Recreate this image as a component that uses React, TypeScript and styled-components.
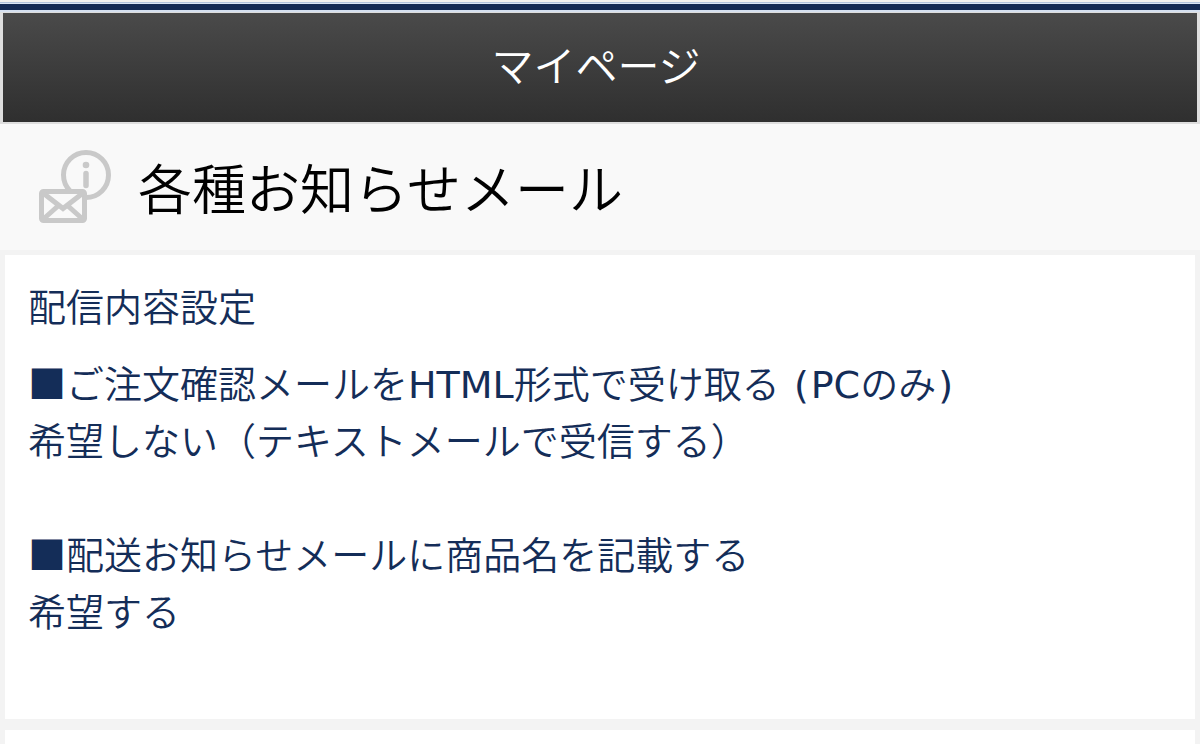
import React from 'react';
import styled, { createGlobalStyle } from 'styled-components';

const GlobalStyle = createGlobalStyle`
  * { box-sizing: border-box; }
  html, body { margin: 0; padding: 0; }
  body {
    background: #f3f3f3;
    color: #142d58;
    font-family: "Noto Sans CJK JP", sans-serif;
    font-weight: 350;
    overflow-x: hidden;
  }
`;

const TopRule = styled.div`
  height: 12px;
  background: linear-gradient(
    to bottom,
    #f4f3ef 0 2px,
    #b4c5dc 2px 3px,
    #dbe7f5 3px 4px,
    #152c54 4px 10px,
    #d5e0f0 10px 12px
  );
`;

const PageHeader = styled.header`
  border: solid #dedede;
  border-width: 1px 3px 2px;
  height: 112px;
  display: flex;
  align-items: center;
  justify-content: center;
  background: linear-gradient(to bottom, #4a4a4a, #2f2f2f) padding-box;
`;

const HeaderTitle = styled.h1`
  margin: 0;
  padding: 0 8px 8px 0;
  color: #fff;
  font-size: 42px;
  font-weight: 350;
  line-height: 60px;
`;

const SectionHeader = styled.div`
  display: flex;
  align-items: center;
  gap: 26px;
  height: 126px;
  padding: 0 38px;
  background: #f9f9f9;
`;

const SectionTitle = styled.h2`
  margin: 0;
  color: #000;
  font-size: 54px;
  font-weight: 350;
  line-height: 78px;
`;

const Panels = styled.main`
  display: flex;
  flex-direction: column;
  gap: 11px;
  padding: 5px 5px 0;
`;

const Panel = styled.section`
  min-height: 464px;
  padding: 21px 23px;
  background: #fff;
  font-size: 38px;
  line-height: 57px;
`;

const NextPanel = styled.section`
  height: 14px;
  background: #fff;
`;

const PanelTitle = styled.h3`
  margin: 0 0 20px;
  font-size: 38px;
  font-weight: 350;
  line-height: 57px;
`;

const Setting = styled.dl`
  margin: 0 0 57px;

  &:last-child {
    margin-bottom: 0;
  }
`;

const SettingName = styled.dt``;

const SettingValue = styled.dd`
  margin: 0;
`;

const Latin = styled.span`
  font-family: "DejaVu Sans", sans-serif;
  font-weight: 400;
  line-height: 1;
`;

const Paren = styled(Latin)`
  padding: 0 2px;
`;

const NoticeMailIcon = () => (
  <svg width="74" height="74" viewBox="0 0 74 74" fill="none" aria-hidden="true">
    <circle cx="48" cy="25" r="22.5" stroke="#c9c9c9" strokeWidth="5" />
    <circle cx="48" cy="15" r="3.3" fill="#c9c9c9" />
    <path d="M48 23.500V35.500" stroke="#c9c9c9" strokeWidth="5.5" strokeLinecap="round" />
    <rect x="3.5" y="41.5" width="43" height="29" rx="2" fill="#f9f9f9" stroke="#c9c9c9" strokeWidth="5" />
    <path d="M5 43L25 58.500L45 43M6 68.500L20 56M44 68.500L30 56" stroke="#c9c9c9" strokeWidth="5" />
  </svg>
);

export default function App() {
  return (
    <>
      <GlobalStyle />
      <TopRule />
      <PageHeader>
        <HeaderTitle>マイページ</HeaderTitle>
      </PageHeader>
      <SectionHeader>
        <NoticeMailIcon />
        <SectionTitle>各種お知らせメール</SectionTitle>
      </SectionHeader>
      <Panels>
        <Panel>
          <PanelTitle>配信内容設定</PanelTitle>
          <Setting>
            <SettingName>
              ■ご注文確認メールを<Latin>HTML</Latin>形式で受け取る<Latin> </Latin><Paren>(</Paren><Latin>PC</Latin>のみ<Paren>)</Paren>
            </SettingName>
            <SettingValue>希望しない（テキストメールで受信する）</SettingValue>
          </Setting>
          <Setting>
            <SettingName>■配送お知らせメールに商品名を記載する</SettingName>
            <SettingValue>希望する</SettingValue>
          </Setting>
        </Panel>
        <NextPanel />
      </Panels>
    </>
  );
}
